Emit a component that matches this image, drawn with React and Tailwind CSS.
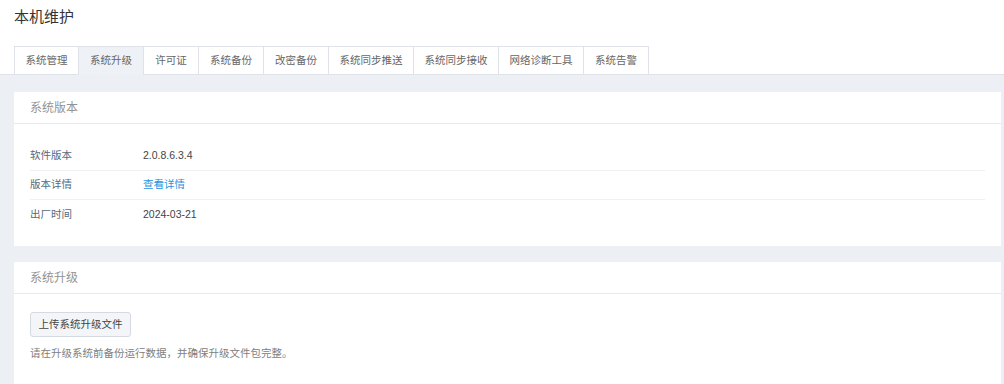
import React, { useState } from 'react';

const tabs = [
  { name: '系统管理', w: 'w-[65px]' },
  { name: '系统升级', w: 'w-[66px]' },
  { name: '许可证', w: 'w-[56px]' },
  { name: '系统备份', w: 'w-[66px]' },
  { name: '改密备份', w: 'w-[66px]' },
  { name: '系统同步推送', w: 'w-[86px]' },
  { name: '系统同步接收', w: 'w-[86px]' },
  { name: '网络诊断工具', w: 'w-[86px]' },
  { name: '系统告警', w: 'w-[66px]' },
];

const font = { fontFamily: '"Liberation Sans", "Noto Sans CJK SC", sans-serif' };

const InfoRow = ({ label, children, last }) => (
  <div className={`flex items-center h-[29px] ${last ? '' : 'border-b border-[#eef0f3]'}`}>
    <div className="w-[113px] text-[10.5px] text-[#566a80]">{label}</div>
    <div className="text-[10.5px] text-[#444]">{children}</div>
  </div>
);

const Card = ({ title, children }) => (
  <div className="bg-white">
    <div className="h-[32px] flex items-center px-[16px] border-b border-[#e6e9ee] text-[12px] text-[#939393]">
      {title}
    </div>
    {children}
  </div>
);

export default function App() {
  const [active, setActive] = useState(1);

  return (
    <div className="min-h-screen bg-white" style={font}>
      {/* 标题 */}
      <div className="h-[46px] pl-[14px] pt-[6px]">
        <h1 className="text-[15px] leading-[22px] text-[#333]">本机维护</h1>
      </div>

      {/* 标签页 */}
      <div className="flex pl-[14px] border-b border-[#dfe3e9]">
        {tabs.map((t, i) => (
          <button
            key={t.name}
            onClick={() => setActive(i)}
            className={`${t.w} h-[29px] -mb-px border border-[#dfe3e9] text-[10.5px] text-[#666] ${i > 0 ? '-ml-px' : ''} ${
              i === active ? 'bg-[#eef1f5] border-b-[#eef1f5]' : 'bg-white'
            }`}
          >
            {t.name}
          </button>
        ))}
      </div>

      {/* 内容区 */}
      <div className="bg-[#eceff3] pl-[14px] pr-[3px] pt-[17px] pb-[16px] flex flex-col gap-[16px]">
        <Card title="系统版本">
          <div className="pl-[16px] pr-[16px] pt-[18px] pb-[17px]">
            <InfoRow label="软件版本">2.0.8.6.3.4</InfoRow>
            <InfoRow label="版本详情">
              <a href="#" className="text-[#2a93e0]">查看详情</a>
            </InfoRow>
            <InfoRow label="出厂时间" last>2024-03-21</InfoRow>
          </div>
        </Card>

        <Card title="系统升级">
          <div className="px-[16px] pt-[17px] pb-[30px]">
            <button className="h-[25px] w-[101px] rounded-[3px] border border-[#d5dae2] bg-[#f3f5f8] text-[10.5px] text-[#444]">
              上传系统升级文件
            </button>
            <p className="mt-[9px] text-[10.5px] text-[#808080]">请在升级系统前备份运行数据，并确保升级文件包完整。</p>
          </div>
        </Card>
      </div>
    </div>
  );
}
